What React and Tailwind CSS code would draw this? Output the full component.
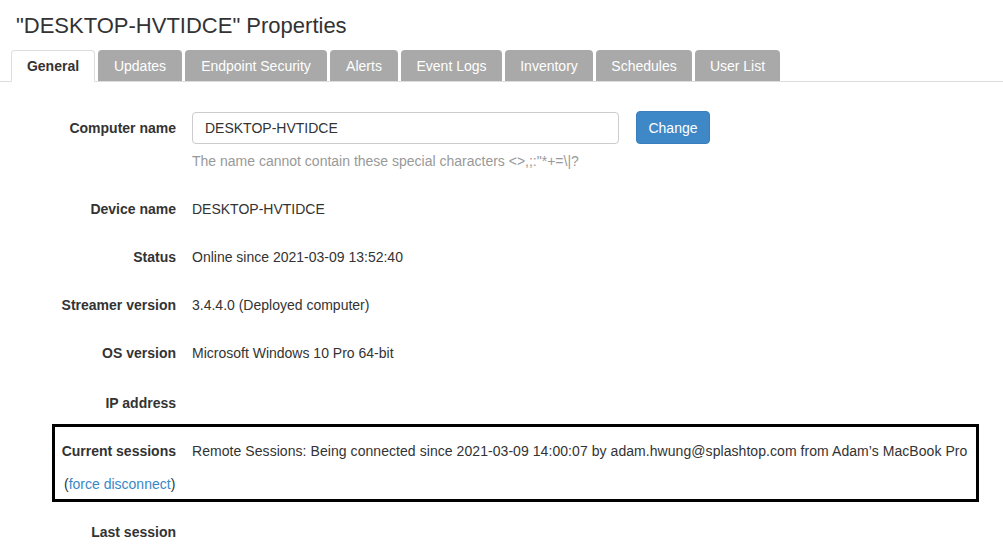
import React from "react";

const tabs = [
    { name: "General", w: "w-[84px]" },
    { name: "Updates", w: "w-[84px]" },
    { name: "Endpoint Security", w: "w-[142px]" },
    { name: "Alerts", w: "w-[68px]" },
    { name: "Event Logs", w: "w-[101px]" },
    { name: "Inventory", w: "w-[88px]" },
    { name: "Schedules", w: "w-[96px]" },
    { name: "User List", w: "w-[85px]" },
];

const Row = ({ label, children, className = "" }) => (
    <div className={`flex items-center h-5 ${className}`}>
        <div className="w-[176px] shrink-0 text-right font-bold">{label}</div>
        <div className="ml-4 whitespace-nowrap">{children}</div>
    </div>
);

const App = () => {
    return (
        <div
            className="w-[1003px] h-[556px] overflow-hidden bg-white text-[#333] text-[14px] leading-5"
            style={{ fontFamily: '"Liberation Sans", Arial, sans-serif' }}
        >
            {/* Title */}
            <h1 className="pl-[16px] pt-[12px] text-[22px] leading-[28px] font-normal">"DESKTOP-HVTIDCE" Properties</h1>

            {/* Tabs */}
            <div className="mt-[10px] pl-[11px] flex items-end gap-[3px] border-b border-[#ddd] h-[32px]">
                {tabs.map((t, i) =>
                    i === 0 ? (
                        <div key={t.name} className={`${t.w} h-[32px] -mb-px flex items-center justify-center bg-white border border-[#ddd] border-b-white rounded-t-[4px] font-bold`}>
                            {t.name}
                        </div>
                    ) : (
                        <div key={t.name} className={`${t.w} h-[31px] flex items-center justify-center bg-[#a9a9a9] text-white rounded-t-[4px] whitespace-nowrap`}>
                            {t.name}
                        </div>
                    )
                )}
            </div>

            {/* Computer name */}
            <div className="mt-[29px] flex items-center">
                <div className="w-[176px] text-right font-bold">Computer name</div>
                <input
                    readOnly
                    value="DESKTOP-HVTIDCE"
                    className="ml-4 w-[427px] h-[32px] px-3 border border-[#ccc] rounded-[4px] text-[#333] outline-none"
                />
                <button className="ml-[17px] w-[74px] h-[33px] bg-[#3e88c8] border border-[#3a7fbd] text-white rounded-[4px]">
                    Change
                </button>
            </div>
            <div className="ml-[192px] mt-[7px] text-[#999]">The name cannot contain these special characters &lt;&gt;,;:"*+=\|?</div>

            <Row label="Device name" className="mt-[28px]">DESKTOP-HVTIDCE</Row>
            <Row label="Status" className="mt-[28px]">Online since 2021-03-09 13:52:40</Row>
            <Row label="Streamer version" className="mt-[28px]">3.4.4.0 (Deployed computer)</Row>
            <Row label="OS version" className="mt-[28px]">Microsoft Windows 10 Pro 64-bit</Row>
            <Row label="IP address" className="mt-[30px]"></Row>

            {/* Highlighted current sessions */}
            <div className="ml-[52px] mt-[11px] w-[927px] border-[3px] border-black pt-[14px] pb-[5px]">
                <div className="flex items-center h-5">
                    <div className="w-[121px] shrink-0 text-right font-bold">Current sessions</div>
                    <div className="ml-4 whitespace-nowrap tracking-[0.06px]">
                        Remote Sessions: Being connected since 2021-03-09 14:00:07 by adam.hwung@splashtop.com from Adam’s MacBook Pro
                    </div>
                </div>
                <div className="mt-[13px] pl-[9px] h-5">
                    (<a className="text-[#3b87c6]">force disconnect</a>)
                </div>
            </div>

            <Row label="Last session" className="mt-[20px]"></Row>
        </div>
    );
};

export default App;
